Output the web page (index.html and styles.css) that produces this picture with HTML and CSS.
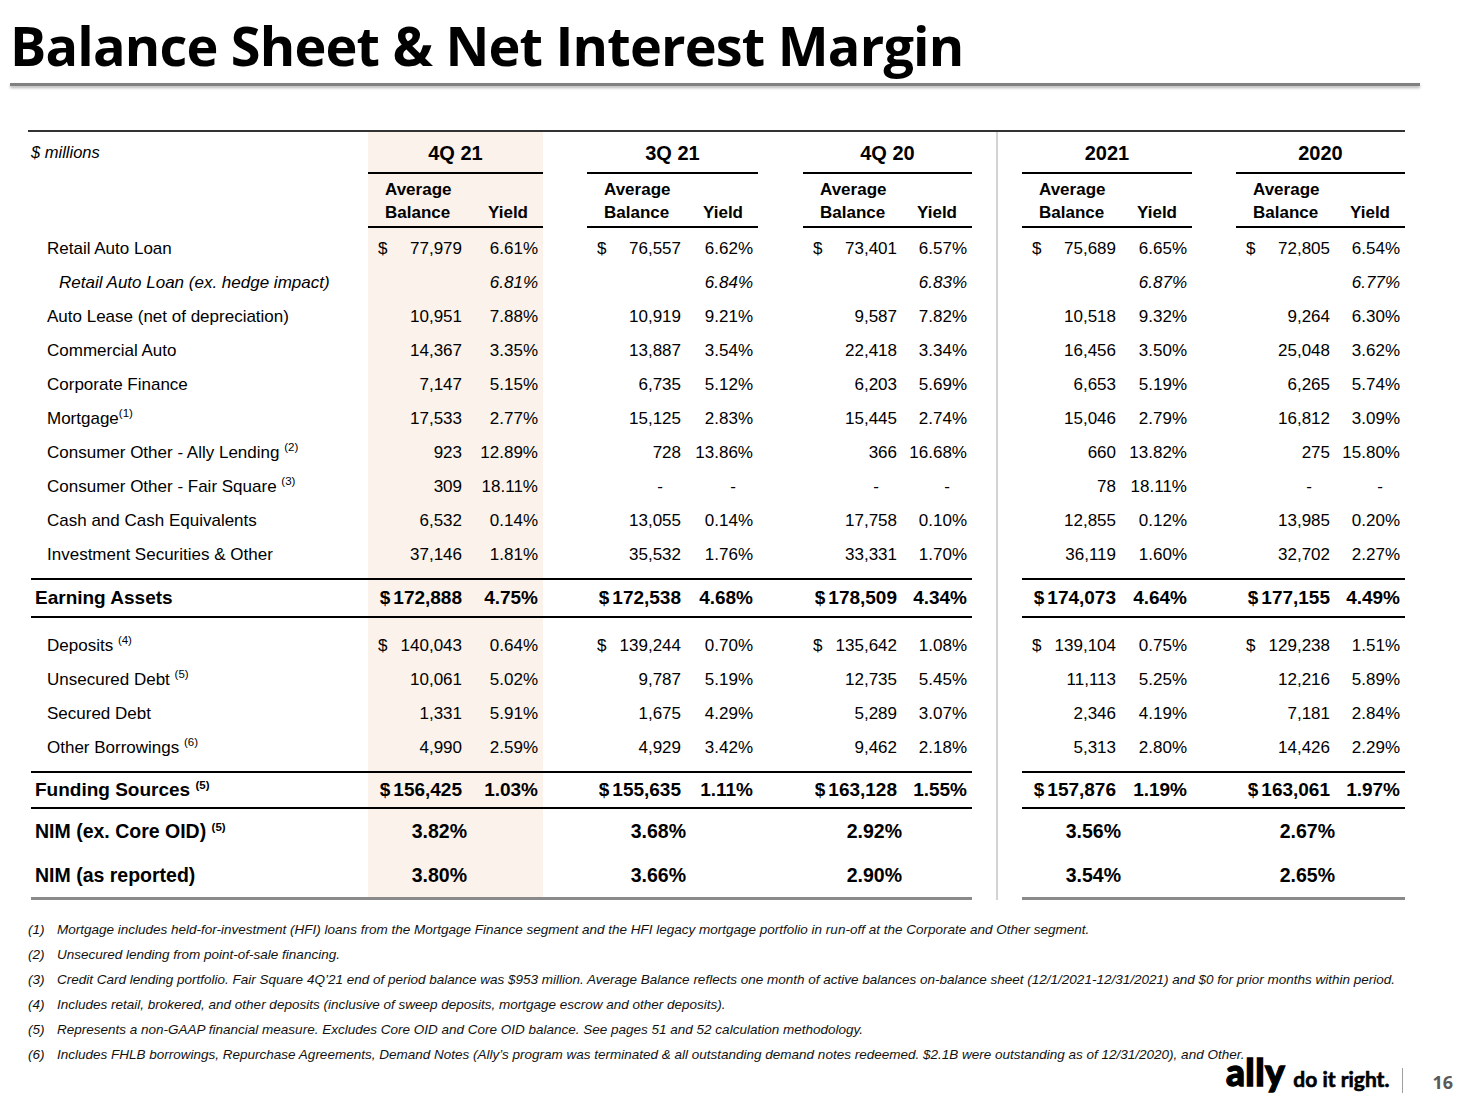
FILE: index.html
```html
<!DOCTYPE html>
<html lang="en">
<head>
<meta charset="utf-8">
<title>Balance Sheet &amp; Net Interest Margin</title>
<link rel="stylesheet" href="styles.css">
</head>
<body>
<div class="slide">
  <h1 class="title">Balance Sheet &amp; Net Interest Margin</h1>
  <div class="rule"></div>

  <div class="tbl">
    <div class="row hg">
      <div class="lab mil"><i>$ millions</i></div>
      <div class="gh sh">4Q 21</div><div class="sp"></div>
      <div class="gh">3Q 21</div><div class="sp"></div>
      <div class="gh">4Q 20</div><div class="sp sep"></div>
      <div class="gh">2021</div><div class="sp"></div>
      <div class="gh">2020</div>
    </div>
    <div class="row sub">
      <div class="lab"></div>
      <div class="g sh"><span class="ab">Average<br>Balance</span><span class="yh">Yield</span></div><div class="sp"></div>
      <div class="g"><span class="ab">Average<br>Balance</span><span class="yh">Yield</span></div><div class="sp"></div>
      <div class="g"><span class="ab">Average<br>Balance</span><span class="yh">Yield</span></div><div class="sp sep"></div>
      <div class="g"><span class="ab">Average<br>Balance</span><span class="yh">Yield</span></div><div class="sp"></div>
      <div class="g"><span class="ab">Average<br>Balance</span><span class="yh">Yield</span></div>
    </div>

    <div class="row r first">
      <div class="lab"><span>Retail Auto Loan</span></div>
      <div class="g sh"><span class="bal"><span>$</span><span>77,979</span></span><span class="yld">6.61%</span></div><div class="sp"></div>
      <div class="g"><span class="bal"><span>$</span><span>76,557</span></span><span class="yld">6.62%</span></div><div class="sp"></div>
      <div class="g"><span class="bal"><span>$</span><span>73,401</span></span><span class="yld">6.57%</span></div><div class="sp sep"></div>
      <div class="g"><span class="bal"><span>$</span><span>75,689</span></span><span class="yld">6.65%</span></div><div class="sp"></div>
      <div class="g"><span class="bal"><span>$</span><span>72,805</span></span><span class="yld">6.54%</span></div>
    </div>
    <div class="row r it">
      <div class="lab"><span>Retail Auto Loan (ex. hedge impact)</span></div>
      <div class="g sh"><span class="bal"></span><span class="yld">6.81%</span></div><div class="sp"></div>
      <div class="g"><span class="bal"></span><span class="yld">6.84%</span></div><div class="sp"></div>
      <div class="g"><span class="bal"></span><span class="yld">6.83%</span></div><div class="sp sep"></div>
      <div class="g"><span class="bal"></span><span class="yld">6.87%</span></div><div class="sp"></div>
      <div class="g"><span class="bal"></span><span class="yld">6.77%</span></div>
    </div>
    <div class="row r">
      <div class="lab"><span>Auto Lease (net of depreciation)</span></div>
      <div class="g sh"><span class="bal"><span></span><span>10,951</span></span><span class="yld">7.88%</span></div><div class="sp"></div>
      <div class="g"><span class="bal"><span></span><span>10,919</span></span><span class="yld">9.21%</span></div><div class="sp"></div>
      <div class="g"><span class="bal"><span></span><span>9,587</span></span><span class="yld">7.82%</span></div><div class="sp sep"></div>
      <div class="g"><span class="bal"><span></span><span>10,518</span></span><span class="yld">9.32%</span></div><div class="sp"></div>
      <div class="g"><span class="bal"><span></span><span>9,264</span></span><span class="yld">6.30%</span></div>
    </div>
    <div class="row r">
      <div class="lab"><span>Commercial Auto</span></div>
      <div class="g sh"><span class="bal"><span></span><span>14,367</span></span><span class="yld">3.35%</span></div><div class="sp"></div>
      <div class="g"><span class="bal"><span></span><span>13,887</span></span><span class="yld">3.54%</span></div><div class="sp"></div>
      <div class="g"><span class="bal"><span></span><span>22,418</span></span><span class="yld">3.34%</span></div><div class="sp sep"></div>
      <div class="g"><span class="bal"><span></span><span>16,456</span></span><span class="yld">3.50%</span></div><div class="sp"></div>
      <div class="g"><span class="bal"><span></span><span>25,048</span></span><span class="yld">3.62%</span></div>
    </div>
    <div class="row r">
      <div class="lab"><span>Corporate Finance</span></div>
      <div class="g sh"><span class="bal"><span></span><span>7,147</span></span><span class="yld">5.15%</span></div><div class="sp"></div>
      <div class="g"><span class="bal"><span></span><span>6,735</span></span><span class="yld">5.12%</span></div><div class="sp"></div>
      <div class="g"><span class="bal"><span></span><span>6,203</span></span><span class="yld">5.69%</span></div><div class="sp sep"></div>
      <div class="g"><span class="bal"><span></span><span>6,653</span></span><span class="yld">5.19%</span></div><div class="sp"></div>
      <div class="g"><span class="bal"><span></span><span>6,265</span></span><span class="yld">5.74%</span></div>
    </div>
    <div class="row r">
      <div class="lab"><span>Mortgage<sup>(1)</sup></span></div>
      <div class="g sh"><span class="bal"><span></span><span>17,533</span></span><span class="yld">2.77%</span></div><div class="sp"></div>
      <div class="g"><span class="bal"><span></span><span>15,125</span></span><span class="yld">2.83%</span></div><div class="sp"></div>
      <div class="g"><span class="bal"><span></span><span>15,445</span></span><span class="yld">2.74%</span></div><div class="sp sep"></div>
      <div class="g"><span class="bal"><span></span><span>15,046</span></span><span class="yld">2.79%</span></div><div class="sp"></div>
      <div class="g"><span class="bal"><span></span><span>16,812</span></span><span class="yld">3.09%</span></div>
    </div>
    <div class="row r">
      <div class="lab"><span>Consumer Other - Ally Lending <sup>(2)</sup></span></div>
      <div class="g sh"><span class="bal"><span></span><span>923</span></span><span class="yld">12.89%</span></div><div class="sp"></div>
      <div class="g"><span class="bal"><span></span><span>728</span></span><span class="yld">13.86%</span></div><div class="sp"></div>
      <div class="g"><span class="bal"><span></span><span>366</span></span><span class="yld">16.68%</span></div><div class="sp sep"></div>
      <div class="g"><span class="bal"><span></span><span>660</span></span><span class="yld">13.82%</span></div><div class="sp"></div>
      <div class="g"><span class="bal"><span></span><span>275</span></span><span class="yld">15.80%</span></div>
    </div>
    <div class="row r">
      <div class="lab"><span>Consumer Other - Fair Square <sup>(3)</sup></span></div>
      <div class="g sh"><span class="bal"><span></span><span>309</span></span><span class="yld">18.11%</span></div><div class="sp"></div>
      <div class="g"><span class="bal"><span></span><span class="dash">-</span></span><span class="yld"><span class="ydash">-</span></span></div><div class="sp"></div>
      <div class="g"><span class="bal"><span></span><span class="dash">-</span></span><span class="yld"><span class="ydash">-</span></span></div><div class="sp sep"></div>
      <div class="g"><span class="bal"><span></span><span>78</span></span><span class="yld">18.11%</span></div><div class="sp"></div>
      <div class="g"><span class="bal"><span></span><span class="dash">-</span></span><span class="yld"><span class="ydash">-</span></span></div>
    </div>
    <div class="row r">
      <div class="lab"><span>Cash and Cash Equivalents</span></div>
      <div class="g sh"><span class="bal"><span></span><span>6,532</span></span><span class="yld">0.14%</span></div><div class="sp"></div>
      <div class="g"><span class="bal"><span></span><span>13,055</span></span><span class="yld">0.14%</span></div><div class="sp"></div>
      <div class="g"><span class="bal"><span></span><span>17,758</span></span><span class="yld">0.10%</span></div><div class="sp sep"></div>
      <div class="g"><span class="bal"><span></span><span>12,855</span></span><span class="yld">0.12%</span></div><div class="sp"></div>
      <div class="g"><span class="bal"><span></span><span>13,985</span></span><span class="yld">0.20%</span></div>
    </div>
    <div class="row r last">
      <div class="lab"><span>Investment Securities &amp; Other</span></div>
      <div class="g sh"><span class="bal"><span></span><span>37,146</span></span><span class="yld">1.81%</span></div><div class="sp"></div>
      <div class="g"><span class="bal"><span></span><span>35,532</span></span><span class="yld">1.76%</span></div><div class="sp"></div>
      <div class="g"><span class="bal"><span></span><span>33,331</span></span><span class="yld">1.70%</span></div><div class="sp sep"></div>
      <div class="g"><span class="bal"><span></span><span>36,119</span></span><span class="yld">1.60%</span></div><div class="sp"></div>
      <div class="g"><span class="bal"><span></span><span>32,702</span></span><span class="yld">2.27%</span></div>
    </div>

    <div class="row t ea">
      <div class="lab"><span>Earning Assets</span></div>
      <div class="g sh"><span class="tb"><span class="cur">$</span>172,888</span><span class="yld">4.75%</span></div><div class="sp"></div>
      <div class="g"><span class="tb"><span class="cur">$</span>172,538</span><span class="yld">4.68%</span></div><div class="sp"></div>
      <div class="g"><span class="tb"><span class="cur">$</span>178,509</span><span class="yld">4.34%</span></div><div class="sp sep"></div>
      <div class="g"><span class="tb"><span class="cur">$</span>174,073</span><span class="yld">4.64%</span></div><div class="sp"></div>
      <div class="g"><span class="tb"><span class="cur">$</span>177,155</span><span class="yld">4.49%</span></div>
    </div>

    <div class="row r ffirst">
      <div class="lab"><span>Deposits <sup>(4)</sup></span></div>
      <div class="g sh"><span class="bal"><span>$</span><span>140,043</span></span><span class="yld">0.64%</span></div><div class="sp"></div>
      <div class="g"><span class="bal"><span>$</span><span>139,244</span></span><span class="yld">0.70%</span></div><div class="sp"></div>
      <div class="g"><span class="bal"><span>$</span><span>135,642</span></span><span class="yld">1.08%</span></div><div class="sp sep"></div>
      <div class="g"><span class="bal"><span>$</span><span>139,104</span></span><span class="yld">0.75%</span></div><div class="sp"></div>
      <div class="g"><span class="bal"><span>$</span><span>129,238</span></span><span class="yld">1.51%</span></div>
    </div>
    <div class="row r">
      <div class="lab"><span>Unsecured Debt <sup>(5)</sup></span></div>
      <div class="g sh"><span class="bal"><span></span><span>10,061</span></span><span class="yld">5.02%</span></div><div class="sp"></div>
      <div class="g"><span class="bal"><span></span><span>9,787</span></span><span class="yld">5.19%</span></div><div class="sp"></div>
      <div class="g"><span class="bal"><span></span><span>12,735</span></span><span class="yld">5.45%</span></div><div class="sp sep"></div>
      <div class="g"><span class="bal"><span></span><span>11,113</span></span><span class="yld">5.25%</span></div><div class="sp"></div>
      <div class="g"><span class="bal"><span></span><span>12,216</span></span><span class="yld">5.89%</span></div>
    </div>
    <div class="row r">
      <div class="lab"><span>Secured Debt</span></div>
      <div class="g sh"><span class="bal"><span></span><span>1,331</span></span><span class="yld">5.91%</span></div><div class="sp"></div>
      <div class="g"><span class="bal"><span></span><span>1,675</span></span><span class="yld">4.29%</span></div><div class="sp"></div>
      <div class="g"><span class="bal"><span></span><span>5,289</span></span><span class="yld">3.07%</span></div><div class="sp sep"></div>
      <div class="g"><span class="bal"><span></span><span>2,346</span></span><span class="yld">4.19%</span></div><div class="sp"></div>
      <div class="g"><span class="bal"><span></span><span>7,181</span></span><span class="yld">2.84%</span></div>
    </div>
    <div class="row r last">
      <div class="lab"><span>Other Borrowings <sup>(6)</sup></span></div>
      <div class="g sh"><span class="bal"><span></span><span>4,990</span></span><span class="yld">2.59%</span></div><div class="sp"></div>
      <div class="g"><span class="bal"><span></span><span>4,929</span></span><span class="yld">3.42%</span></div><div class="sp"></div>
      <div class="g"><span class="bal"><span></span><span>9,462</span></span><span class="yld">2.18%</span></div><div class="sp sep"></div>
      <div class="g"><span class="bal"><span></span><span>5,313</span></span><span class="yld">2.80%</span></div><div class="sp"></div>
      <div class="g"><span class="bal"><span></span><span>14,426</span></span><span class="yld">2.29%</span></div>
    </div>

    <div class="row t fs">
      <div class="lab"><span>Funding Sources <sup>(5)</sup></span></div>
      <div class="g sh"><span class="tb"><span class="cur">$</span>156,425</span><span class="yld">1.03%</span></div><div class="sp"></div>
      <div class="g"><span class="tb"><span class="cur">$</span>155,635</span><span class="yld">1.11%</span></div><div class="sp"></div>
      <div class="g"><span class="tb"><span class="cur">$</span>163,128</span><span class="yld">1.55%</span></div><div class="sp sep"></div>
      <div class="g"><span class="tb"><span class="cur">$</span>157,876</span><span class="yld">1.19%</span></div><div class="sp"></div>
      <div class="g"><span class="tb"><span class="cur">$</span>163,061</span><span class="yld">1.97%</span></div>
    </div>

    <div class="row nim n1">
      <div class="lab"><span>NIM (ex. Core OID) <sup>(5)</sup></span></div>
      <div class="g sh"><span class="nv">3.82%</span></div><div class="sp"></div>
      <div class="g"><span class="nv">3.68%</span></div><div class="sp"></div>
      <div class="g"><span class="nv">2.92%</span></div><div class="sp sep"></div>
      <div class="g"><span class="nv">3.56%</span></div><div class="sp"></div>
      <div class="g"><span class="nv">2.67%</span></div>
    </div>
    <div class="row nim n2">
      <div class="lab"><span>NIM (as reported)</span></div>
      <div class="g sh"><span class="nv">3.80%</span></div><div class="sp"></div>
      <div class="g"><span class="nv">3.66%</span></div><div class="sp"></div>
      <div class="g"><span class="nv">2.90%</span></div><div class="sp sep"></div>
      <div class="g"><span class="nv">3.54%</span></div><div class="sp"></div>
      <div class="g"><span class="nv">2.65%</span></div>
    </div>
  </div>

  <div class="notes">
    <div class="note"><span class="n">(1)</span><span>Mortgage includes held-for-investment (HFI) loans from the Mortgage Finance segment and the HFI legacy mortgage portfolio in run-off at the Corporate and Other segment.</span></div>
    <div class="note"><span class="n">(2)</span><span>Unsecured lending from point-of-sale financing.</span></div>
    <div class="note"><span class="n">(3)</span><span>Credit Card lending portfolio. Fair Square 4Q’21 end of period balance was $953 million. Average Balance reflects one month of active balances on-balance sheet (12/1/2021-12/31/2021) and $0 for prior months within period.</span></div>
    <div class="note"><span class="n">(4)</span><span>Includes retail, brokered, and other deposits (inclusive of sweep deposits, mortgage escrow and other deposits).</span></div>
    <div class="note"><span class="n">(5)</span><span>Represents a non-GAAP financial measure. Excludes Core OID and Core OID balance. See pages 51 and 52 calculation methodology.</span></div>
    <div class="note"><span class="n">(6)</span><span>Includes FHLB borrowings, Repurchase Agreements, Demand Notes (Ally’s program was terminated &amp; all outstanding demand notes redeemed. $2.1B were outstanding as of 12/31/2020), and Other.</span></div>
  </div>

  <div class="footer">
    <span class="ally">ally</span>
    <span class="tag">do it right.</span>
    <span class="bar"></span>
    <span class="page">16</span>
  </div>
</div>
</body>
</html>
```

FILE: styles.css
```css
* { box-sizing: border-box; }

body {
  margin: 0;
  background: #fff;
  color: #000;
  font-family: "Liberation Sans", Arial, sans-serif;
}

.slide {
  width: 1462px;
  height: 1094px;
  overflow: hidden;
}

.title {
  margin: 0;
  padding: 18px 0 0 10px;
  font: 700 54px/54px "Open Sans", sans-serif;
  letter-spacing: -0.8px;
  color: #000;
  white-space: nowrap;
}

.rule {
  margin: 11px 0 0 10px;
  width: 1410px;
  height: 3px;
  background: #808080;
  box-shadow: 0 2px 3px rgba(0, 0, 0, 0.3);
}

/* ---------- table ---------- */
.tbl {
  margin: 44px 0 0 28px;
  width: 1377px;
  border-top: 2px solid #333;
}

.row {
  display: grid;
  grid-template-columns: 340px 175px 44px 171px 45px 169px 50px 170px 44px 169px;
  font-size: 17px;
}

.row > div {
  display: flex;
  align-items: center;
}

.row > .g {
  display: grid;
  grid-template-columns: 94px 1fr;
  align-items: center;
}

.sh { background: #faf2eb; }

.sep {
  background: linear-gradient(#d3d3d3, #d3d3d3) center / 2px 100% no-repeat;
}

.lab { padding-left: 19px; white-space: nowrap; }

sup {
  font-size: 11.5px;
  vertical-align: 7px;
  line-height: 0;
}

/* header rows */
.hg > div { height: 42px; padding-top: 2px; }
.hg > .gh {
  justify-content: center;
  font-weight: 700;
  font-size: 20px;
  border-bottom: 2px solid #000;
}
.hg > .mil {
  padding-left: 3px;
  padding-bottom: 4px;
  font-size: 16.5px;
}

.sub > div { height: 54px; }
.sub > .g {
  border-bottom: 2px solid #000;
  align-items: end;
  padding-bottom: 2px;
  font-weight: 700;
  line-height: 23px;
}
.sub .ab { padding-left: 17px; }
.sub .yh { text-align: right; padding-right: 15px; }

/* data rows */
.r > div { height: 34px; }
.r.first > div { height: 38px; padding-top: 4px; }
.r.last > div { height: 40px; padding-bottom: 6px; }
.r.ffirst > div { height: 45px; padding-top: 11px; }

.bal {
  display: flex;
  justify-content: space-between;
  padding-left: 10px;
}
.yld {
  text-align: right;
  padding-right: 5px;
}
.it { font-style: italic; }
.it > .lab { padding-left: 31px; }

.dash { margin-right: 18px; }
.ydash { margin-right: 17px; }

/* total rows */
.t { font-weight: 700; font-size: 19px; }
.t > div:not(.sep) {
  border-top: 2px solid #000;
  border-bottom: 2px solid #000;
}
.t > .lab { margin-left: 3px; padding-left: 4px; }
.ea > div { height: 40px; }
.fs > div { height: 38px; }
.tb { text-align: right; }
.cur { margin-right: 3px; }

/* NIM rows */
.nim { font-weight: 700; font-size: 19.5px; }
.nim > .lab { margin-left: 3px; padding-left: 4px; }
.n1 > div { height: 44px; }
.n2 > div { height: 47px; }
.n2 > div:not(.sep) { border-bottom: 3px solid #8a8a8a; }
.nv { text-align: right; margin-right: -5px; }

/* ---------- footnotes ---------- */
.notes {
  margin: 16.5px 0 0 28px;
  font: italic 13.5px/17px "Liberation Sans", Arial, sans-serif;
  color: #111;
}
.note { display: flex; white-space: nowrap; padding: 4px 0; }
.n { width: 29px; flex: none; }

/* ---------- footer ---------- */
.footer {
  display: flex;
  justify-content: flex-end;
  align-items: flex-end;
  height: 36px;
  margin-top: -8.5px;
  padding-right: 9px;
}
.ally {
  font: 900 37px/33px "Lato", sans-serif;
  -webkit-text-stroke: 1.3px #000;
  letter-spacing: 0.5px;
  margin-bottom: 6px;
  color: #000;
}
.tag {
  font: 700 21px/22px "Lato", sans-serif;
  -webkit-text-stroke: 0.6px #000;
  margin: 0 0 4.5px 8px;
  color: #000;
}
.bar {
  width: 1px;
  height: 25px;
  background: #a0a0a0;
  margin: 0 0 1px 13px;
}
.page {
  font: 700 18px/18px "Open Sans", sans-serif;
  color: #595959;
  margin: 0 0 3px 29px;
}
```
